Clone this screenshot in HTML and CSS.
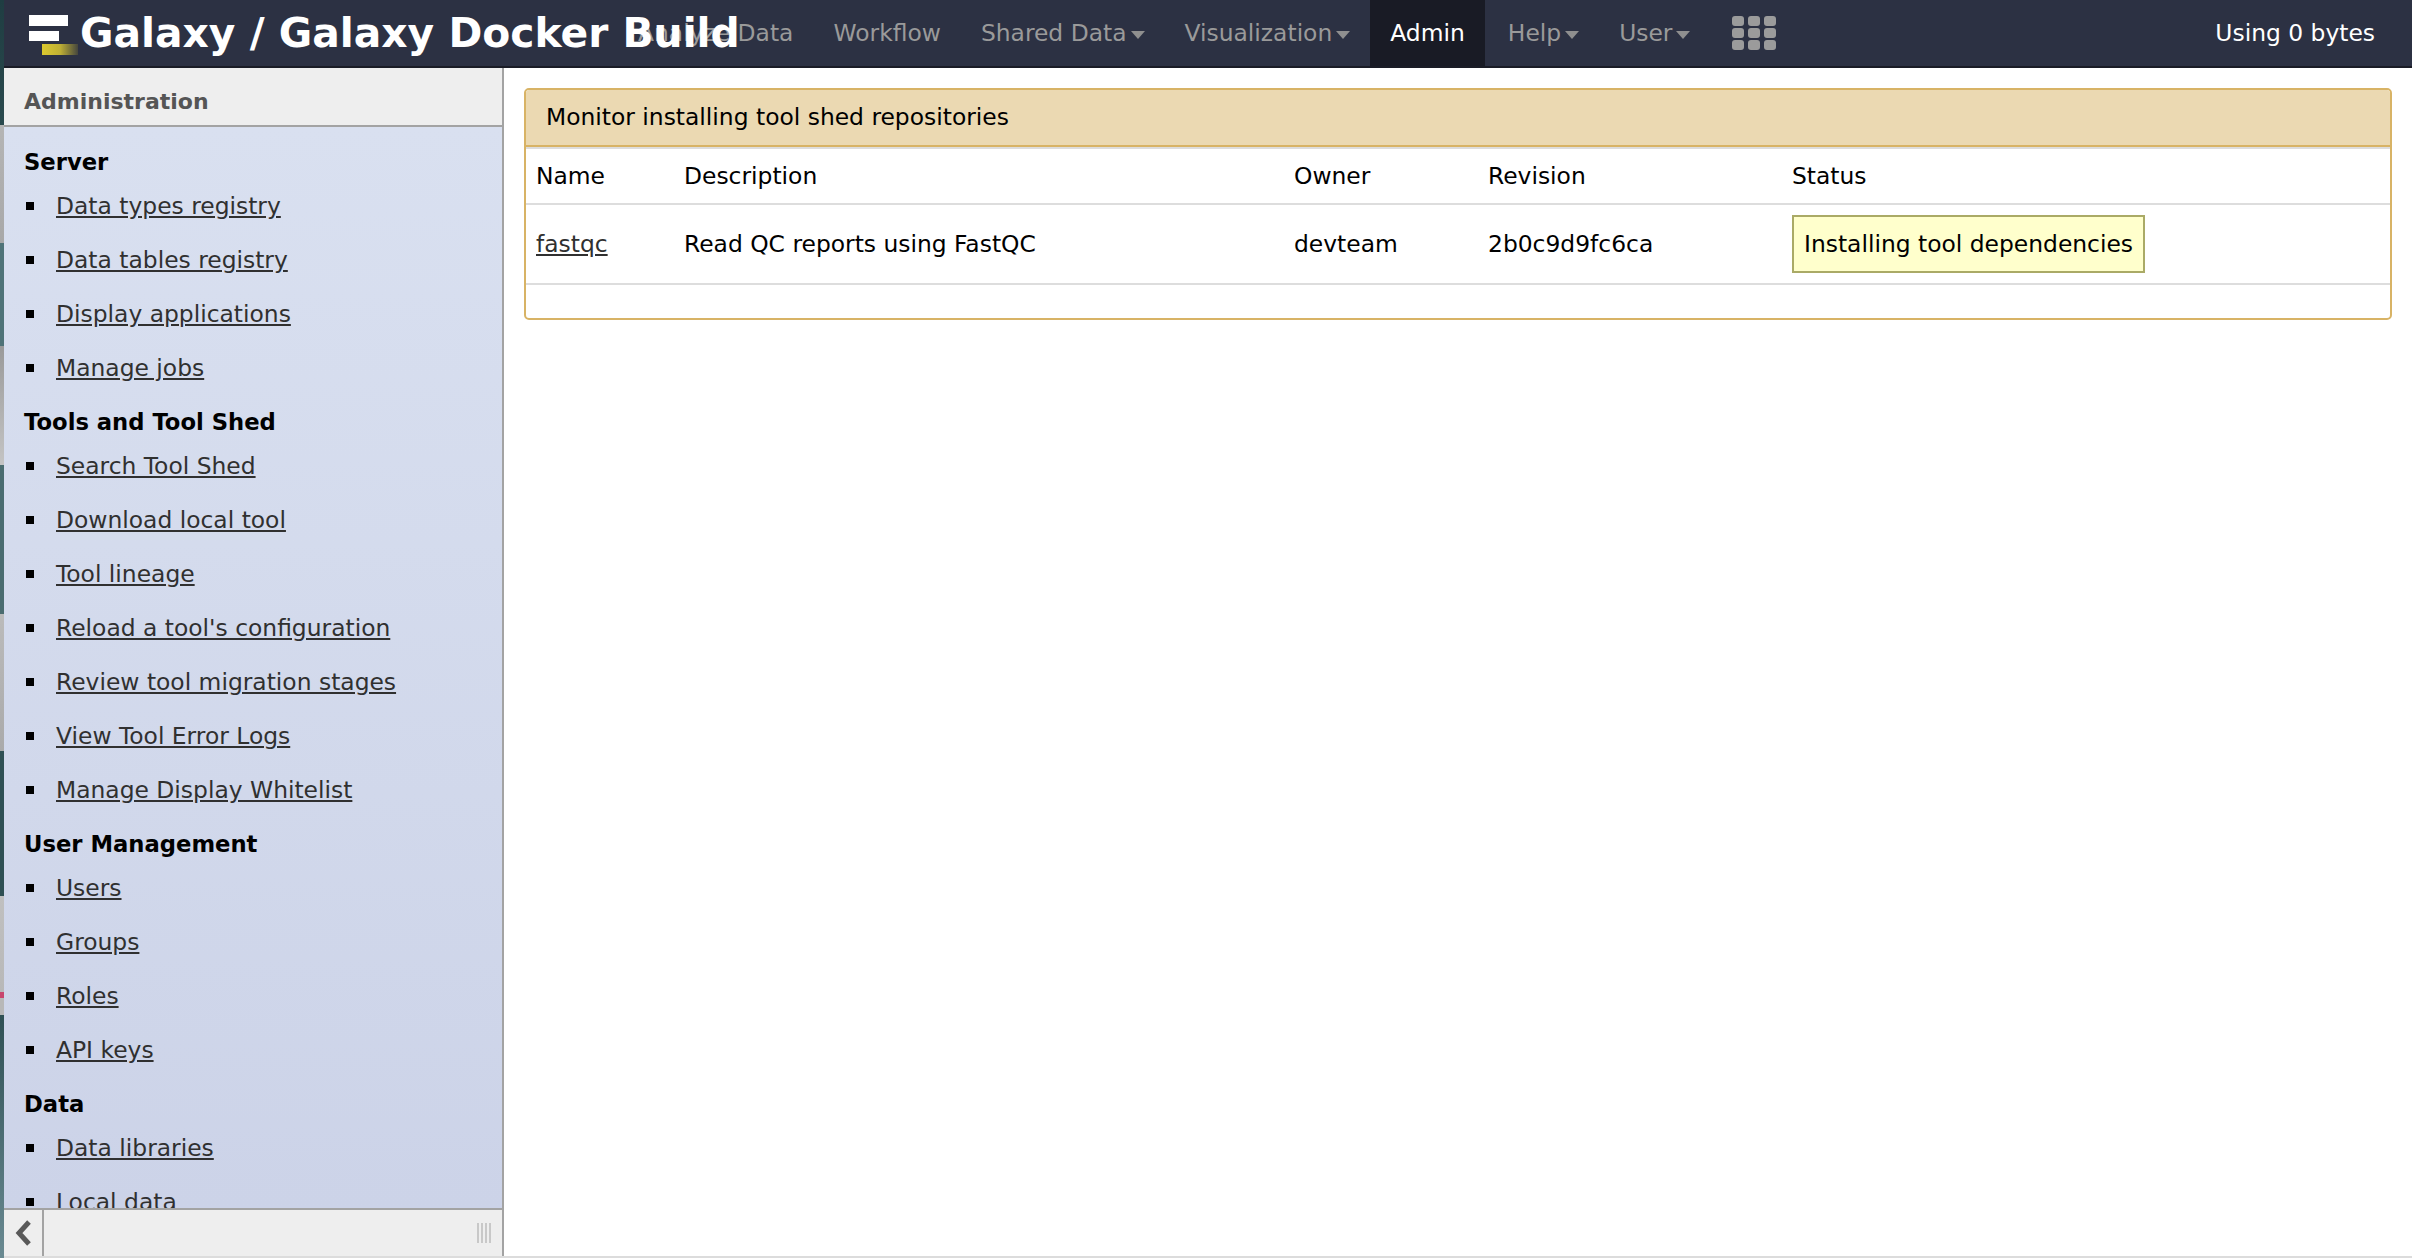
FILE: index.html
```html
<!DOCTYPE html>
<html lang="en">
<head>
  <meta charset="UTF-8">
  <meta name="viewport" content="width=device-width, initial-scale=1.0">
  <title>Galaxy / Galaxy Docker Build</title>
  <link rel="stylesheet" href="styles.css">
</head>
<body>

  <header class="masthead">
    <!-- brand sits over the first nav tab, same as the real page -->
    <a class="brand" href="#">
      <svg class="brand-logo" width="50" height="40" viewBox="0 0 50 40">
        <defs>
          <linearGradient id="logoFade" x1="0" x2="1" y1="0" y2="0">
            <stop offset="0" stop-color="#dcc92e"/>
            <stop offset="0.5" stop-color="#bfb034"/>
            <stop offset="1" stop-color="#45463e"/>
          </linearGradient>
          <filter id="logoBlur">
            <feGaussianBlur stdDeviation="0.6"/>
          </filter>
        </defs>
        <g filter="url(#logoBlur)">
          <rect x="0" y="0" width="39" height="11" fill="#fff"/>
          <rect x="0" y="16" width="30" height="10" fill="#fff"/>
          <rect x="13" y="29" width="36" height="11" fill="url(#logoFade)"/>
        </g>
      </svg>
      <span class="brand-text">Galaxy / Galaxy Docker Build</span>
    </a>

    <nav class="tabs">
      <a class="tab tab-analyze" href="#">Analyze Data</a>
      <a class="tab" href="#">Workflow</a>
      <a class="tab has-caret" href="#">Shared Data</a>
      <a class="tab has-caret" href="#">Visualization</a>
      <a class="tab active" href="#">Admin</a>
      <a class="tab has-caret" href="#">Help</a>
      <a class="tab has-caret" href="#">User</a>
      <a class="tab tab-grid" href="#">
        <svg width="44" height="34" viewBox="0 0 44 34" fill="#9b9b9b">
          <rect x="0" y="0" width="12" height="10" rx="3"/>
          <rect x="16" y="0" width="12" height="10" rx="3"/>
          <rect x="32" y="0" width="12" height="10" rx="3"/>
          <rect x="0" y="12" width="12" height="10" rx="3"/>
          <rect x="16" y="12" width="12" height="10" rx="3"/>
          <rect x="32" y="12" width="12" height="10" rx="3"/>
          <rect x="0" y="24" width="12" height="10" rx="3"/>
          <rect x="16" y="24" width="12" height="10" rx="3"/>
          <rect x="32" y="24" width="12" height="10" rx="3"/>
        </svg>
      </a>
    </nav>

    <div class="quota">Using 0 bytes</div>
  </header>

  <div class="columns">
    <aside class="sidebar">
      <div class="sidebar-head">Administration</div>

      <div class="sidebar-body">
        <h4>Server</h4>
        <ul>
          <li><a href="#">Data types registry</a></li>
          <li><a href="#">Data tables registry</a></li>
          <li><a href="#">Display applications</a></li>
          <li><a href="#">Manage jobs</a></li>
        </ul>

        <h4>Tools and Tool Shed</h4>
        <ul>
          <li><a href="#">Search Tool Shed</a></li>
          <li><a href="#">Download local tool</a></li>
          <li><a href="#">Tool lineage</a></li>
          <li><a href="#">Reload a tool's configuration</a></li>
          <li><a href="#">Review tool migration stages</a></li>
          <li><a href="#">View Tool Error Logs</a></li>
          <li><a href="#">Manage Display Whitelist</a></li>
        </ul>

        <h4>User Management</h4>
        <ul>
          <li><a href="#">Users</a></li>
          <li><a href="#">Groups</a></li>
          <li><a href="#">Roles</a></li>
          <li><a href="#">API keys</a></li>
        </ul>

        <h4>Data</h4>
        <ul>
          <li><a href="#">Data libraries</a></li>
          <li><a href="#">Local data</a></li>
        </ul>
      </div>

      <div class="sidebar-foot">
        <div class="collapse-btn">
          <svg width="18" height="26" viewBox="0 0 18 26">
            <path d="M15 2 L5 13 L15 24" fill="none" stroke="#595959" stroke-width="5"/>
          </svg>
        </div>
        <div class="grip"></div>
      </div>
    </aside>

    <main class="content">
      <section class="panel">
        <div class="panel-head">Monitor installing tool shed repositories</div>
        <table class="repos">
          <thead>
            <tr>
              <th class="col-name">Name</th>
              <th class="col-desc">Description</th>
              <th class="col-owner">Owner</th>
              <th class="col-rev">Revision</th>
              <th>Status</th>
            </tr>
          </thead>
          <tbody>
            <tr>
              <td><a href="#">fastqc</a></td>
              <td>Read QC reports using FastQC</td>
              <td>devteam</td>
              <td>2b0c9d9fc6ca</td>
              <td><span class="status">Installing tool dependencies</span></td>
            </tr>
          </tbody>
        </table>
      </section>
    </main>
  </div>

</body>
</html>
```

FILE: styles.css
```css
* {
  box-sizing: border-box;
}

body {
  margin: 0;
  height: 1258px;
  overflow: hidden;
  font-family: "DejaVu Sans", sans-serif;
  font-size: 23.4px;
  color: #000;
  /* bit of the desktop showing down the left edge of the window */
  background: linear-gradient(
    #1f3d42 0, #2a4a4e 125px,
    #b5b5b5 125px, #a8a8a8 243px,
    #4f7378 243px, #4f7378 346px,
    #9a9a9a 346px, #c4c4c4 465px,
    #4a6c70 465px, #4a6c70 614px,
    #bbb 614px, #aaa 751px,
    #2f5054 751px, #2f5054 896px,
    #c0c0c0 896px, #b8b8b8 992px,
    #c8466e 992px, #c8466e 998px,
    #b8b8b8 998px, #b8b8b8 1015px,
    #2f5054 1015px, #6a8a92 1258px);
  display: flex;
  flex-direction: column;
}

/* top bar */
.masthead {
  position: relative;
  height: 68px;
  flex: none;
  margin-left: 4px;
  background: #2c3143;
  border-bottom: 2px solid #1a1c26;
  display: flex;
  color: #fff;
}

.brand {
  position: absolute;
  left: 25px;
  top: 0;
  height: 66px;
  display: flex;
  align-items: center;
  color: #fff;
  text-decoration: none;
  z-index: 2;
}

.brand-logo {
  margin-top: 4px;
  margin-right: 1px;
}

.brand-text {
  font-weight: 700;
  font-size: 40.8px;
  white-space: nowrap;
}

.tabs {
  display: flex;
  height: 66px;
}

.tab {
  display: flex;
  align-items: center;
  padding: 0 20px;
  color: #9a9a9a;
  font-size: 23.4px;
  text-decoration: none;
  white-space: nowrap;
}

.tab-analyze {
  margin-left: 614px;
}

.has-caret::after {
  content: "";
  margin-left: 4px;
  margin-top: 3px;
  border-left: 7.5px solid transparent;
  border-right: 7.5px solid transparent;
  border-top: 8px solid #8f8f8f;
}

.tab.active {
  margin-right: 3px;
  background: #191b25;
  color: #fff;
}

.tab-grid {
  padding: 0 0 0 22px;
}

.quota {
  margin-left: auto;
  height: 66px;
  line-height: 66px;
  padding-right: 37px;
}

/* two columns under the bar */
.columns {
  flex: 1;
  min-height: 0;
  display: flex;
  margin-left: 4px;
  background: #fff;
  border-bottom: 2px solid #dcdcdc;
}

.sidebar {
  width: 500px;
  flex: none;
  display: flex;
  flex-direction: column;
  border-right: 2px solid #a3a3a3;
}

.sidebar-head {
  height: 59px;
  flex: none;
  line-height: 67px;
  padding-left: 20px;
  background: #eee;
  border-bottom: 2px solid #a3a3a3;
  color: #555;
  font-size: 22px;
  font-weight: 700;
}

.sidebar-body {
  flex: 1;
  min-height: 0;
  overflow: hidden;
  padding: 8px 20px 0;
  background: linear-gradient(#d9e0f0, #ccd3e8);
}

.sidebar-body h4 {
  margin: 0;
  height: 44px;
  padding-top: 10px;
  line-height: 34px;
  font-size: 22.7px;
  font-weight: 700;
}

.sidebar-body ul {
  margin: 0;
  padding: 0;
  list-style: none;
}

.sidebar-body li {
  height: 54px;
  line-height: 54px;
  padding-left: 32px;
  position: relative;
}

.sidebar-body li::before {
  content: "";
  position: absolute;
  left: 2px;
  top: 23px;
  width: 8px;
  height: 8px;
  background: #000;
}

.sidebar-body a {
  color: #303030;
}

.sidebar-foot {
  height: 48px;
  flex: none;
  display: flex;
  align-items: center;
  justify-content: space-between;
  background: #eee;
  border-top: 2px solid #a3a3a3;
}

.collapse-btn {
  width: 40px;
  height: 100%;
  display: flex;
  align-items: center;
  justify-content: center;
  border-right: 2px solid #a3a3a3;
}

.grip {
  width: 15px;
  height: 20px;
  margin-right: 10px;
  background: repeating-linear-gradient(90deg, #c8c8c8 0, #c8c8c8 2px, #eee 2px, #eee 4px);
}

/* main panel */
.content {
  flex: 1;
  min-width: 0;
  padding: 20px 20px 0;
}

.panel {
  border: 2px solid #d8b365;
  border-radius: 5px;
  height: 232px;
  overflow: hidden;
}

.panel-head {
  height: 57px;
  line-height: 55px;
  padding-left: 20px;
  background: #ebd9b2;
  border-bottom: 2px solid #d8b365;
}

.repos {
  width: 100%;
  border-collapse: collapse;
  table-layout: fixed;
  border-top: 2px solid #ddd;
}

.repos th {
  height: 56px;
  padding: 0 10px;
  text-align: left;
  font-weight: 400;
  border-bottom: 2px solid #ddd;
}

.repos td {
  height: 80px;
  padding: 0 10px;
  border-bottom: 2px solid #ddd;
  white-space: nowrap;
}

.repos a {
  color: #303030;
}

.col-name { width: 148px; }
.col-desc { width: 610px; }
.col-owner { width: 194px; }
.col-rev { width: 304px; }

.status {
  display: inline-block;
  padding: 0 10px;
  height: 58px;
  line-height: 54px;
  background: #ffffcc;
  border: 2px solid #aaaa66;
}
```
